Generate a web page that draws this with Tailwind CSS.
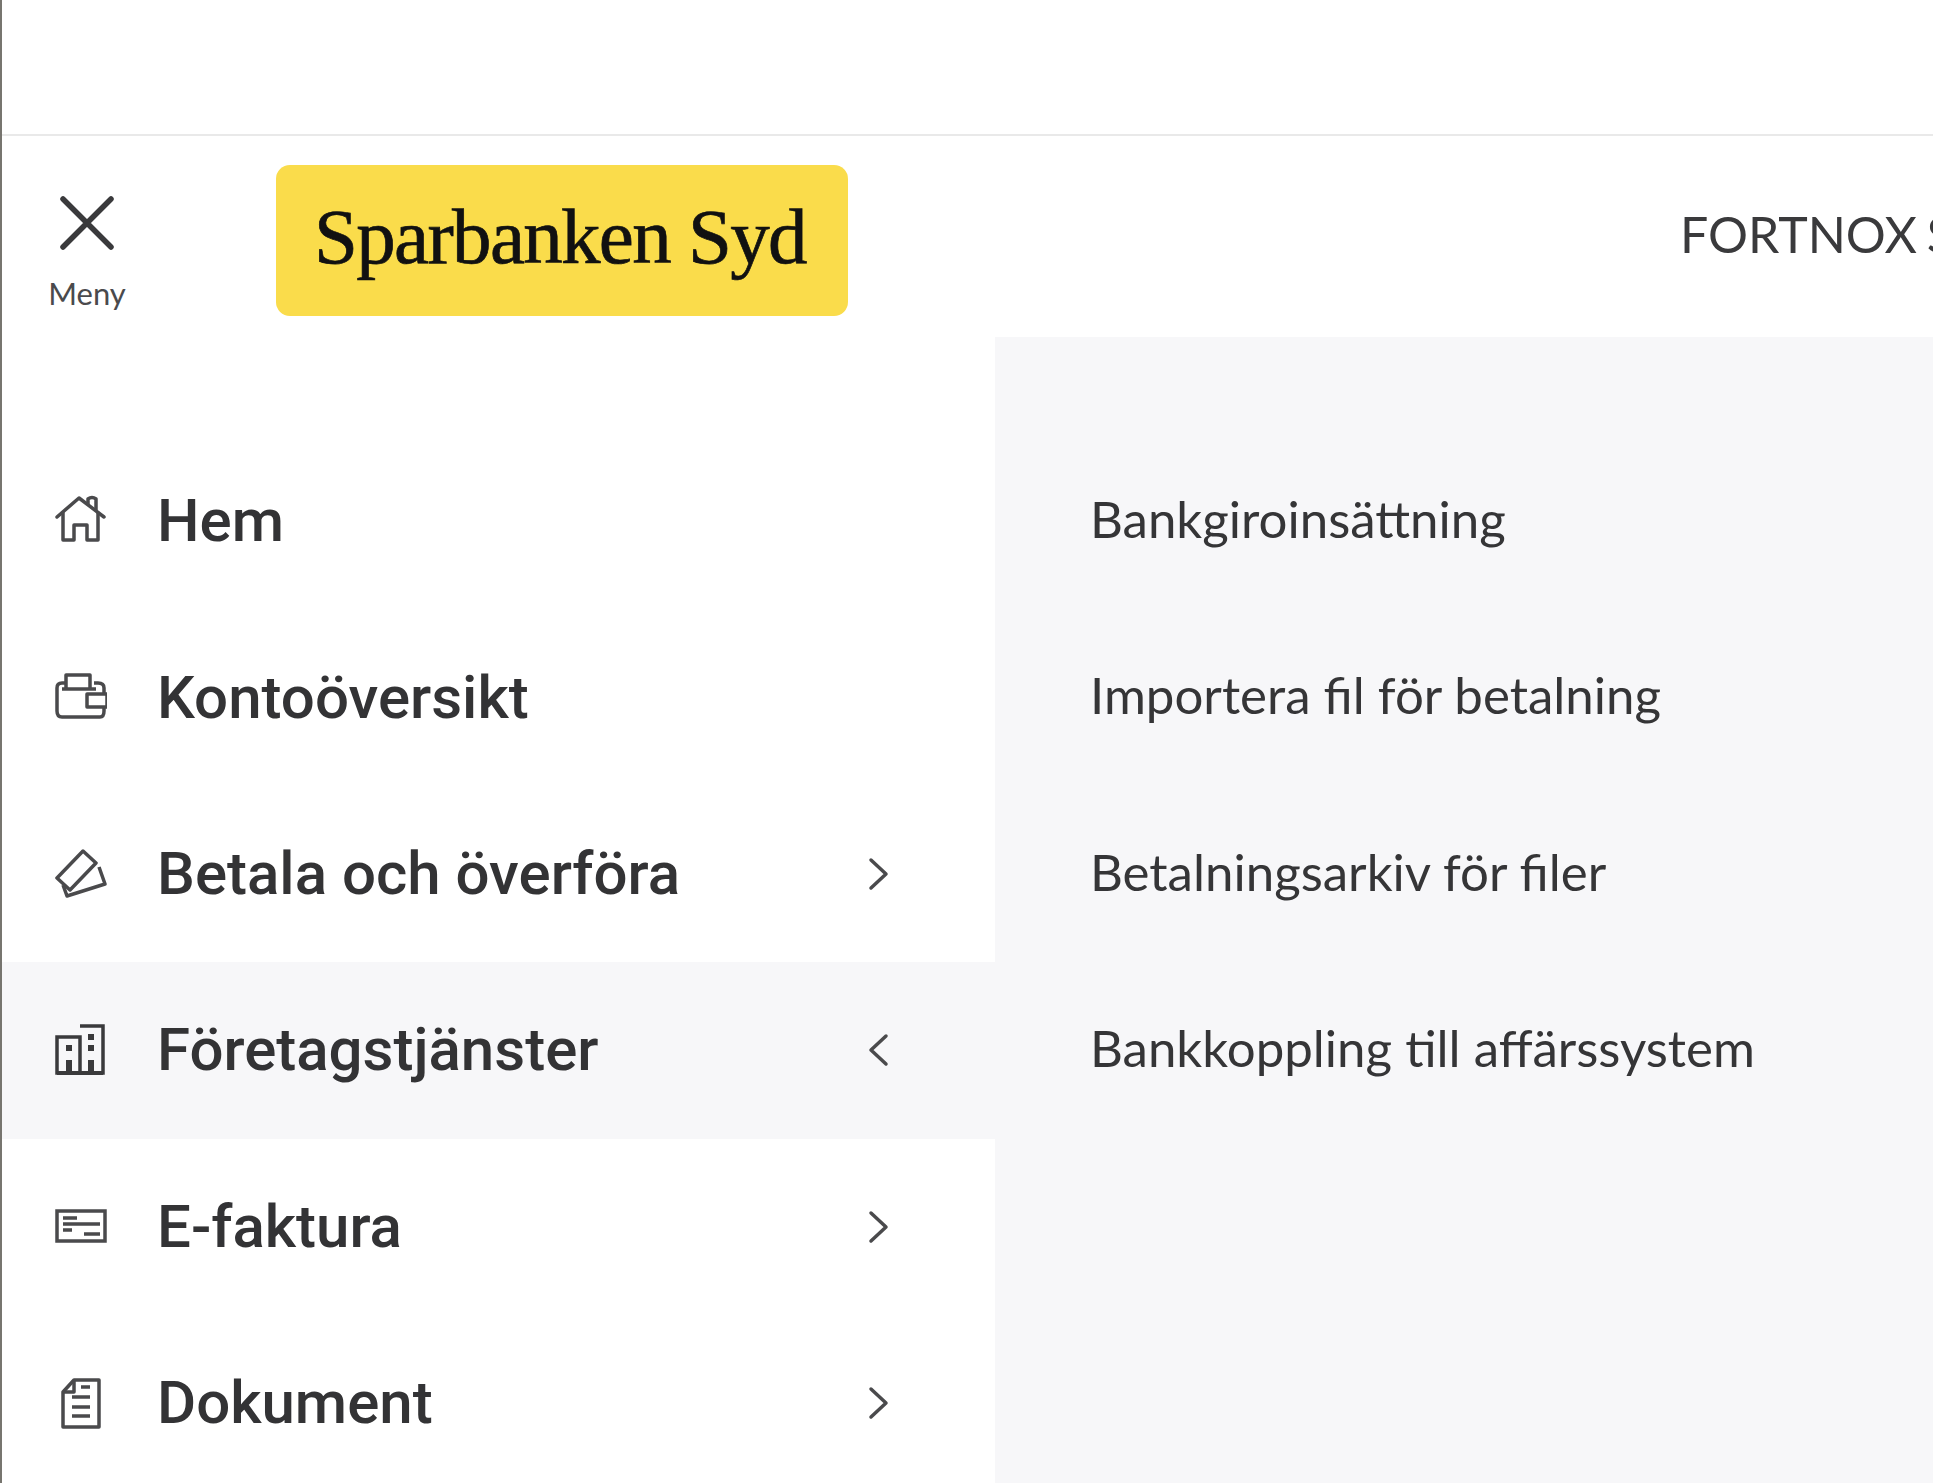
<!DOCTYPE html>
<html lang="sv">
<head>
  <meta charset="UTF-8" />
  <title>Sparbanken Syd</title>
  <script src="https://cdn.jsdelivr.net/npm/@tailwindcss/browser@4"></script>
</head>
<body class="h-[1483px] overflow-hidden bg-white border-l-2 border-[#77756f] font-['Lato',sans-serif] text-[#3a3a3c]">

  <!-- top bar -->
  <div class="h-[136px] -ml-[2px] border-l-2 border-l-[#7b6d4c] border-b-2 border-b-[#e9e9e9]"></div>

  <!-- header -->
  <header class="h-[201px] flex items-start overflow-hidden">
    <button class="w-[172px] shrink-0 pt-[60px] pr-[2px] flex flex-col items-center">
      <svg class="w-[54px] h-[54px]" viewBox="0 0 54 54" fill="none" stroke="#3a3a3c" stroke-width="5.5" stroke-linecap="round"><path d="M3 3L51 51M51 3L3 51"/></svg>
      <span class="text-[31px] leading-[36px] mt-[25px] text-[#4a4a4c]">Meny</span>
    </button>
    <div class="mt-[29px] ml-[102px] w-[572px] h-[151px] shrink-0 rounded-[14px] bg-[#fadc4b] flex items-center justify-center">
      <span class="font-['Liberation_Serif',serif] text-[79px] leading-none tracking-[-1.7px] [-webkit-text-stroke:0.7px_#111] text-[#111] mb-[8px] mr-[4px]">Sparbanken Syd</span>
    </div>
    <div class="ml-[832px] mt-[67px] text-[50px] leading-[62px] whitespace-nowrap [word-spacing:-3px]">FORTNOX SYD AB</div>
  </header>

  <main class="flex h-[1146px]">
    <!-- main menu -->
    <nav class="w-[993px] shrink-0 pt-[96px] font-['Roboto',sans-serif] font-medium text-[60px] text-[#333335]">
      <a class="h-[176.4px] flex items-center pl-[53px] pr-[105px]">
        <svg class="w-[52px] h-[52px] shrink-0" viewBox="0 0 52 52" fill="none" stroke="#4a4a4c" stroke-width="3.5" stroke-linecap="round" stroke-linejoin="round"><path d="M2 22L24 3L49 22"/><path d="M8 18V45H19V30H32V45H43V18"/><path d="M33 9V4Q37 1 41 4V15"/></svg>
        <span class="ml-[50px]">Hem</span>
      </a>
      <a class="h-[176.4px] flex items-center pl-[53px] pr-[105px]">
        <svg class="w-[52px] h-[52px] shrink-0" viewBox="0 0 52 52" fill="none" stroke="#4a4a4c" stroke-width="3.5" stroke-linejoin="round"><path d="M11 11H7Q2 11 2 16V39Q2 45 7 45H45Q49 45 49 39V34M49 21V16Q49 11 43 11H39"/><path d="M11 17V3H35V17"/><path d="M7 17H41"/><rect x="32" y="22" width="20" height="13"/></svg>
        <span class="ml-[50px]">Kontoöversikt</span>
      </a>
      <a class="h-[176.4px] flex items-center pl-[53px] pr-[105px]">
        <svg class="w-[52px] h-[52px] shrink-0" viewBox="0 0 52 52" fill="none" stroke="#4a4a4c" stroke-width="3.5" stroke-linejoin="round"><path d="M2 30L28 3L41 15L15 42Z"/><path d="M8 37L12 48L50 36L44 19"/></svg>
        <span class="ml-[50px]">Betala och överföra</span>
        <svg class="ml-auto w-[22px] h-[34px] shrink-0" viewBox="0 0 22 34" fill="none" stroke="#4a4a4c" stroke-width="3.5" stroke-linecap="round" stroke-linejoin="round"><path d="M3 3L18 17L3 31"/></svg>
      </a>
      <a class="h-[176.4px] flex items-center pl-[53px] pr-[105px] bg-[#f7f7f9]">
        <svg class="w-[52px] h-[52px] shrink-0" viewBox="0 0 52 52" fill="none" stroke="#3a3a3c" stroke-width="3.5"><path d="M2 49V13H25V49Z"/><path d="M25 2H48V49H25"/><path d="M2 49H48" stroke-width="4"/><rect x="11" y="21" width="6" height="6" fill="#3a3a3c" stroke="none"/><rect x="33" y="10" width="6" height="6" fill="#3a3a3c" stroke="none"/><rect x="33" y="21" width="6" height="6" fill="#3a3a3c" stroke="none"/><rect x="11" y="36" width="6" height="13" fill="#3a3a3c" stroke="none"/><rect x="33" y="36" width="6" height="13" fill="#3a3a3c" stroke="none"/></svg>
        <span class="ml-[50px]">Företagstjänster</span>
        <svg class="ml-auto w-[22px] h-[34px] shrink-0" viewBox="0 0 22 34" fill="none" stroke="#4a4a4c" stroke-width="3.5" stroke-linecap="round" stroke-linejoin="round"><path d="M18 3L3 17L18 31"/></svg>
      </a>
      <a class="h-[176.4px] flex items-center pl-[53px] pr-[105px]">
        <svg class="w-[52px] h-[52px] shrink-0" viewBox="0 0 52 52" fill="none" stroke="#4a4a4c" stroke-width="3.5"><rect x="2" y="10" width="48" height="30"/><path d="M8 17H22M8 23H45M8 29H17M29 33H45"/></svg>
        <span class="ml-[50px]">E-faktura</span>
        <svg class="ml-auto w-[22px] h-[34px] shrink-0" viewBox="0 0 22 34" fill="none" stroke="#4a4a4c" stroke-width="3.5" stroke-linecap="round" stroke-linejoin="round"><path d="M3 3L18 17L3 31"/></svg>
      </a>
      <a class="h-[176.4px] flex items-center pl-[53px] pr-[105px]">
        <svg class="w-[52px] h-[52px] shrink-0" viewBox="0 0 52 52" fill="none" stroke="#4a4a4c" stroke-width="3.5" stroke-linejoin="round"><path d="M8 15L19 3H44V50H8Z"/><path d="M8 15H19V3"/><path d="M26 10H35M17 20H35M17 30H35M17 39H35"/></svg>
        <span class="ml-[50px]">Dokument</span>
        <svg class="ml-auto w-[22px] h-[34px] shrink-0" viewBox="0 0 22 34" fill="none" stroke="#4a4a4c" stroke-width="3.5" stroke-linecap="round" stroke-linejoin="round"><path d="M3 3L18 17L3 31"/></svg>
      </a>
    </nav>

    <!-- sub menu -->
    <section class="flex-1 bg-[#f7f7f9] pt-[94px] pl-[95px] text-[51px] text-[#353537]">
      <a class="h-[176.4px] flex items-center">Bankgiroinsättning</a>
      <a class="h-[176.4px] flex items-center">Importera fil för betalning</a>
      <a class="h-[176.4px] flex items-center">Betalningsarkiv för filer</a>
      <a class="h-[176.4px] flex items-center">Bankkoppling till affärssystem</a>
    </section>
  </main>
</body>
</html>
